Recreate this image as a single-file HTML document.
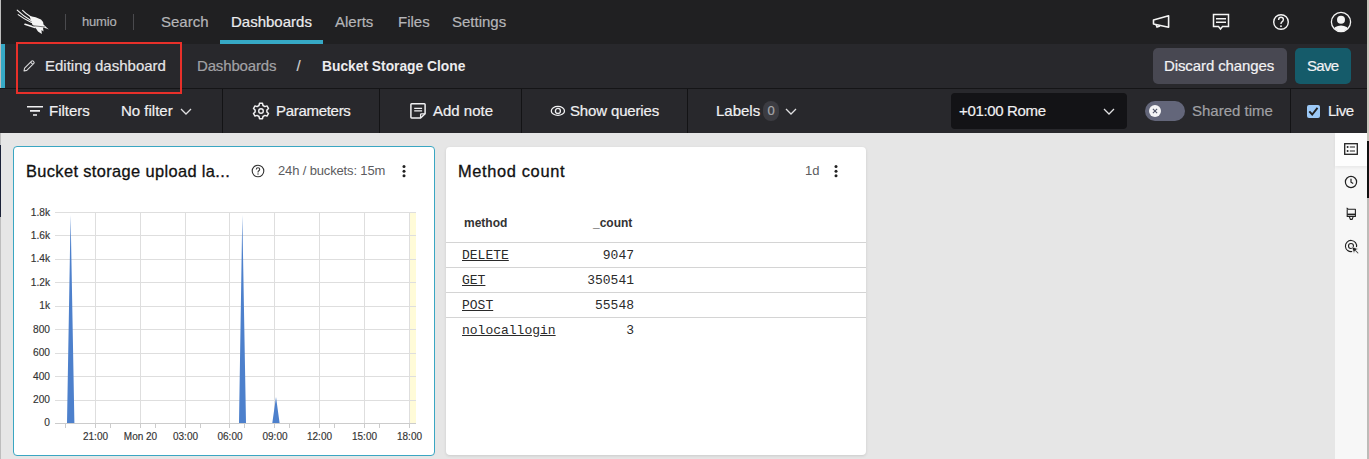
<!DOCTYPE html>
<html><head><meta charset="utf-8">
<style>
*{margin:0;padding:0;box-sizing:border-box}
html,body{width:1369px;height:459px;overflow:hidden;background:#e6e6e6;font-family:"Liberation Sans",sans-serif}
.a{position:absolute;white-space:nowrap;-webkit-text-stroke-width:0.2px}
.ylab,.xlab{-webkit-text-stroke-width:0.15px}
.mono{-webkit-text-stroke-width:0!important}
#top{position:absolute;left:0;top:0;width:1369px;height:44px;background:#202022}
#r2{position:absolute;left:0;top:44px;width:1369px;height:44px;background:#28282c}
#r3{position:absolute;left:0;top:88px;width:1369px;height:45px;background:#28282c;border-top:1px solid #151517}
.nav{font-size:15px;color:#b5b5b8;top:13px}
.sep{position:absolute;width:1px;background:#131315}
.t3{font-size:15px;color:#f0f0f2;top:102px}
.card{position:absolute;background:#fff;border-radius:4px}
.ylab{position:absolute;font-size:10.2px;color:#333;text-align:right;width:30px;left:20px;margin-top:1px}
.xlab{position:absolute;font-size:10px;color:#333;top:431px;width:50px;text-align:center}
.mono{font-family:"Liberation Mono",monospace;font-size:13px;color:#2a2a2a;margin-top:1px}
</style></head><body>
<!-- top nav -->
<div id="top"></div>
<svg class="a" style="left:14px;top:6px" width="40" height="32" viewBox="0 0 40 32">
 <g fill="none" stroke="#f4f4f4" stroke-width="1.1" stroke-linecap="round">
  <path d="M3.2 4.2 Q9 10 17 14.5"/><path d="M8.6 4.4 Q12 8 17 11"/><path d="M4.2 8.6 Q10 13 17.5 16.5"/>
  <path d="M11 18.3 L21 21.5" stroke-width="1.6"/>
 </g>
 <path fill="#f4f4f4" d="M15.5 10 Q22 10.5 27 13.5 Q29.5 15.5 29.5 18.5 L34.8 23.5 L32.5 22.5 L29 21.5 L29.5 25.5 L27.5 24 L27.8 28 L24 25.5 L21 21 L18.5 19 Z"/>
 <path d="M18 19.6 L31 21" stroke="#202022" stroke-width="0.6"/>
</svg>
<div class="sep" style="left:65px;top:14px;height:16px;background:#4a4a4e"></div>
<div class="a" style="left:82px;top:14px;font-size:13px;color:#b0b0b4;letter-spacing:-0.2px">humio</div>
<div class="sep" style="left:133px;top:14px;height:16px;background:#4a4a4e"></div>
<div class="a nav" style="left:161px">Search</div>
<div class="a nav" style="left:231px;color:#ececee">Dashboards</div>
<div class="a" style="left:220px;top:40px;width:103px;height:4px;background:#36a9c6"></div>
<div class="a nav" style="left:335px">Alerts</div>
<div class="a nav" style="left:398px">Files</div>
<div class="a nav" style="left:452px">Settings</div>
<!-- right icons -->
<svg class="a" style="left:1150px;top:12px" width="22" height="20" viewBox="0 0 22 20">
 <path d="M3.5 8 L18.6 3.8 L18.6 15.2 L3.5 12 Z" fill="none" stroke="#f4f4f4" stroke-width="1.6" stroke-linejoin="round"/>
 <path d="M6 12.5 L7 15 L10 14" fill="none" stroke="#f4f4f4" stroke-width="1.5"/>
</svg>
<svg class="a" style="left:1211px;top:12px" width="20" height="20" viewBox="0 0 20 20">
 <path d="M2.5 2.5 H17.5 V14.5 H11.5 L9.5 17 L7.5 14.5 H2.5 Z" fill="none" stroke="#f4f4f4" stroke-width="1.5"/>
 <path d="M5 6.8 H15 M5 10.3 H15" stroke="#f4f4f4" stroke-width="1.4"/>
</svg>
<svg class="a" style="left:1271px;top:12px" width="20" height="20" viewBox="0 0 20 20">
 <circle cx="10" cy="10" r="7.3" fill="none" stroke="#f4f4f4" stroke-width="1.4"/>
 <path d="M7.6 8 Q7.6 5.3 10 5.3 Q12.4 5.3 12.4 7.6 Q12.4 9.2 10.8 10 Q10 10.5 10 12" fill="none" stroke="#f4f4f4" stroke-width="1.4"/>
 <circle cx="10" cy="14.2" r="0.9" fill="#f4f4f4"/>
</svg>
<svg class="a" style="left:1330px;top:11px" width="22" height="22" viewBox="0 0 22 22">
 <defs><clipPath id="uc"><circle cx="11" cy="11" r="9.3"/></clipPath></defs>
 <circle cx="11" cy="11" r="9.6" fill="none" stroke="#f4f4f4" stroke-width="1.3"/>
 <circle cx="11" cy="8.8" r="4" fill="#f4f4f4"/>
 <g clip-path="url(#uc)"><ellipse cx="11" cy="20" rx="8" ry="5.5" fill="#f4f4f4"/></g>
</svg>

<!-- row 2 -->
<div id="r2"></div>
<div class="a" style="left:0;top:0;width:1px;height:88px;background:#bdbdbd"></div>
<div class="a" style="left:1px;top:44px;width:4px;height:44px;background:#36a9c6"></div>
<svg class="a" style="left:22px;top:58.5px" width="14" height="14" viewBox="0 0 14 14">
 <path d="M2 12 L2.6 9.2 L9.6 2.2 Q10.4 1.4 11.2 2.2 L11.8 2.8 Q12.6 3.6 11.8 4.4 L4.8 11.4 Z M8.6 3.2 L10.8 5.4" fill="none" stroke="#d8d8da" stroke-width="1.1" stroke-linejoin="round"/>
</svg>
<div class="a" style="left:45px;top:57px;font-size:15px;color:#e6e6e8">Editing dashboard</div>
<div class="a" style="left:197px;top:57px;font-size:15px;color:#a2a2a6;letter-spacing:-0.15px">Dashboards</div>
<div class="a" style="left:296.5px;top:57px;font-size:15px;color:#d0d0d2">/</div>
<div class="a" style="left:322px;top:59px;font-size:13.8px;font-weight:bold;color:#ececee;-webkit-text-stroke-width:0">Bucket Storage Clone</div>
<div class="a" style="left:1153px;top:48px;width:134px;height:36px;background:#484852;border-radius:5px"></div>
<div class="a" style="left:1164px;top:57px;font-size:15px;color:#f2f2f4;letter-spacing:-0.1px">Discard changes</div>
<div class="a" style="left:1295px;top:48px;width:56px;height:36px;background:#155b6a;border-radius:5px"></div>
<div class="a" style="left:1307px;top:57px;font-size:15px;color:#f2f2f4;letter-spacing:-0.7px">Save</div>

<!-- row 3 -->
<div id="r3"></div>
<div class="sep" style="left:222px;top:89px;height:44px"></div>
<div class="sep" style="left:379px;top:89px;height:44px"></div>
<div class="sep" style="left:521px;top:89px;height:44px"></div>
<div class="sep" style="left:687px;top:89px;height:44px"></div>
<div class="sep" style="left:1290px;top:89px;height:44px"></div>
<svg class="a" style="left:26px;top:104px" width="18" height="14" viewBox="0 0 18 14">
 <path d="M1 2.8 H17 M4 6.9 H14 M7 11 H11" stroke="#f0f0f2" stroke-width="1.6"/>
</svg>
<div class="a t3" style="left:49px">Filters</div>
<div class="a t3" style="left:121px">No filter</div>
<svg class="a" style="left:180px;top:106px" width="12" height="10" viewBox="0 0 12 10"><path d="M1 3 L6 8 L11 3" fill="none" stroke="#e0e0e2" stroke-width="1.3"/></svg>
<svg class="a" style="left:252px;top:102px" width="18" height="18" viewBox="0 0 18 18">
 <path d="M7.5 1.3 H10.5 L11 3.5 L12.9 4.6 L15 3.9 L16.5 6.5 L14.9 8 V10 L16.5 11.5 L15 14.1 L12.9 13.4 L11 14.5 L10.5 16.7 H7.5 L7 14.5 L5.1 13.4 L3 14.1 L1.5 11.5 L3.1 10 V8 L1.5 6.5 L3 3.9 L5.1 4.6 L7 3.5 Z" fill="none" stroke="#f0f0f2" stroke-width="1.5" stroke-linejoin="round"/>
 <circle cx="9" cy="9" r="2.3" fill="none" stroke="#f0f0f2" stroke-width="1.4"/>
</svg>
<div class="a t3" style="left:276px;letter-spacing:-0.3px">Parameters</div>
<svg class="a" style="left:409px;top:102px" width="18" height="18" viewBox="0 0 18 18">
 <path d="M2.6 1.8 H15.3 Q16.1 1.8 16.1 2.6 V11.8 L11.6 16 H2.6 Q1.9 16 1.9 15.3 V2.5 Q1.9 1.8 2.6 1.8 Z" fill="none" stroke="#f0f0f2" stroke-width="1.5" stroke-linejoin="round"/>
 <path d="M16.1 11.8 H12.4 Q11.6 11.8 11.6 12.6 V16" fill="none" stroke="#f0f0f2" stroke-width="1.3"/>
 <path d="M5.2 6.4 H13.1 M5.2 8.8 H13.1" stroke="#f0f0f2" stroke-width="1.3"/>
</svg>
<div class="a t3" style="left:433px">Add note</div>
<svg class="a" style="left:550px;top:104px" width="16" height="14" viewBox="0 0 16 14">
 <ellipse cx="7.9" cy="6.9" rx="6.6" ry="4.5" fill="none" stroke="#f0f0f2" stroke-width="1.3"/>
 <circle cx="7.9" cy="6.9" r="2.5" fill="none" stroke="#f0f0f2" stroke-width="1.3"/>
</svg>
<div class="a t3" style="left:570px;letter-spacing:-0.15px">Show queries</div>
<div class="a t3" style="left:716px">Labels</div>
<div class="a" style="left:763px;top:101px;width:16px;height:20px;background:#3c3c42;border-radius:8px;font-size:13px;color:#a8a8ac;text-align:center;line-height:20px">0</div>
<svg class="a" style="left:785px;top:106px" width="12" height="10" viewBox="0 0 12 10"><path d="M1 3 L6 8 L11 3" fill="none" stroke="#e0e0e2" stroke-width="1.3"/></svg>
<div class="a" style="left:951px;top:93px;width:176px;height:36px;background:#131316;border-radius:4px"></div>
<div class="a t3" style="left:959px;letter-spacing:-0.35px">+01:00 Rome</div>
<svg class="a" style="left:1103px;top:106px" width="12" height="10" viewBox="0 0 12 10"><path d="M1 3 L6 8 L11 3" fill="none" stroke="#e0e0e2" stroke-width="1.3"/></svg>
<div class="a" style="left:1145px;top:101px;width:40px;height:20px;background:#63667a;border-radius:10px"></div>
<svg class="a" style="left:1148px;top:104px" width="14" height="14" viewBox="0 0 14 14">
 <circle cx="7" cy="7" r="6" fill="#f4f4f6"/>
 <path d="M4.9 4.9 L9.1 9.1 M9.1 4.9 L4.9 9.1" stroke="#505468" stroke-width="1.1"/>
</svg>
<div class="a t3" style="left:1192px;color:#a0a0a4">Shared time</div>
<div class="a" style="left:1307px;top:105px;width:13px;height:13px;background:#9cc9f7;border-radius:2px"></div>
<svg class="a" style="left:1307px;top:105px" width="13" height="13" viewBox="0 0 13 13"><path d="M2.3 6.3 L5.2 9.5 L10.5 2.9" fill="none" stroke="#222" stroke-width="1.9"/></svg>
<div class="a t3" style="left:1328px;letter-spacing:-0.5px">Live</div>

<div class="a" style="left:16px;top:42px;width:166px;height:52px;border:2px solid #e8302a"></div>
<!-- content -->
<div class="a" style="left:0;top:133px;width:1px;height:326px;background:#bdbdbd"></div>
<div class="a" style="left:0;top:145px;width:1px;height:72px;background:#1c2238"></div>

<!-- card 1 -->
<div class="card" style="left:13px;top:146px;width:422px;height:310px;border:1px solid #3aa6c2"></div>
<div class="a" style="left:26px;top:162px;font-size:16.4px;color:#111;letter-spacing:0.37px;-webkit-text-stroke:0.3px #111">Bucket storage upload la...</div>
<svg class="a" style="left:251px;top:164px" width="14" height="14" viewBox="0 0 14 14">
 <circle cx="7" cy="7" r="5.8" fill="none" stroke="#333" stroke-width="1.1"/>
 <path d="M5.3 5.6 Q5.3 3.8 7 3.8 Q8.7 3.8 8.7 5.3 Q8.7 6.3 7.6 6.9 Q7 7.3 7 8.4" fill="none" stroke="#333" stroke-width="1.1"/>
 <circle cx="7" cy="10" r="0.7" fill="#333"/>
</svg>
<div class="a" style="left:278px;top:163px;font-size:13px;color:#5c5c60;letter-spacing:-0.15px;-webkit-text-stroke-width:0">24h / buckets: 15m</div>
<svg class="a" style="left:400px;top:164px" width="8" height="14" viewBox="0 0 8 14"><circle cx="4" cy="2.6" r="1.5" fill="#222"/><circle cx="4" cy="7.2" r="1.5" fill="#222"/><circle cx="4" cy="11.8" r="1.5" fill="#222"/></svg>

<svg class="a" style="left:0;top:0" width="440" height="459" viewBox="0 0 440 459">
 <rect x="410" y="212" width="6" height="211" fill="#fffbd8"/>
 <g stroke="#dedede" stroke-width="1">
  <path d="M55 212.5 H416 M55 235.5 H416 M55 259.5 H416 M55 282.5 H416 M55 306.5 H416 M55 329.5 H416 M55 353.5 H416 M55 376.5 H416 M55 400.5 H416"/>
  <path d="M95.5 212 V423 M140.5 212 V423 M185.5 212 V423 M229.5 212 V423 M274.5 212 V423 M319.5 212 V423 M364.5 212 V423 M409.5 212 V423"/>
 </g>
 <path d="M67 423 L70.6 215 L74.4 423 Z M239 423 L242.3 215 L246 423 Z M272.3 423 L276 397 L279.6 423 Z" fill="#4d80cc"/>
 <g stroke="#cccccc" stroke-width="1">
  <path d="M55 423.5 H416"/>
  <path d="M65.5 424 V428 M95.5 424 V428 M110.5 424 V428 M140.5 424 V428 M155.5 424 V428 M185.5 424 V428 M200.5 424 V428 M229.5 424 V428 M244.5 424 V428 M274.5 424 V428 M289.5 424 V428 M319.5 424 V428 M334.5 424 V428 M364.5 424 V428 M379.5 424 V428 M409.5 424 V428"/>
 </g>
</svg>
<div class="ylab" style="top:206px">1.8k</div>
<div class="ylab" style="top:229px">1.6k</div>
<div class="ylab" style="top:252px">1.4k</div>
<div class="ylab" style="top:276px">1.2k</div>
<div class="ylab" style="top:299px">1k</div>
<div class="ylab" style="top:323px">800</div>
<div class="ylab" style="top:346px">600</div>
<div class="ylab" style="top:370px">400</div>
<div class="ylab" style="top:393px">200</div>
<div class="ylab" style="top:416px">0</div>
<div class="xlab" style="left:70.5px">21:00</div>
<div class="xlab" style="left:115.5px">Mon 20</div>
<div class="xlab" style="left:160.5px">03:00</div>
<div class="xlab" style="left:205px">06:00</div>
<div class="xlab" style="left:250px">09:00</div>
<div class="xlab" style="left:294.5px">12:00</div>
<div class="xlab" style="left:339.5px">15:00</div>
<div class="xlab" style="left:384.5px">18:00</div>

<!-- card 2 -->
<div class="card" style="left:446px;top:147px;width:420px;height:308px;box-shadow:0 1px 3px rgba(0,0,0,0.12)"></div>
<div class="a" style="left:458px;top:162px;font-size:16.4px;color:#111;letter-spacing:0.65px;-webkit-text-stroke:0.3px #111">Method count</div>
<div class="a" style="left:805px;top:163px;font-size:13px;color:#5c5c60;-webkit-text-stroke-width:0">1d</div>
<svg class="a" style="left:832px;top:164px" width="8" height="14" viewBox="0 0 8 14"><circle cx="4" cy="2.6" r="1.5" fill="#222"/><circle cx="4" cy="7.2" r="1.5" fill="#222"/><circle cx="4" cy="11.8" r="1.5" fill="#222"/></svg>
<div class="a" style="left:464px;top:216px;font-size:12px;font-weight:bold;color:#333;-webkit-text-stroke-width:0">method</div>
<div class="a" style="left:593px;top:216px;font-size:12px;font-weight:bold;color:#333;-webkit-text-stroke-width:0">_count</div>
<div class="a" style="left:446px;top:242px;width:420px;height:1px;background:#d4d4d4"></div>
<div class="a" style="left:446px;top:267px;width:420px;height:1px;background:#d4d4d4"></div>
<div class="a" style="left:446px;top:292px;width:420px;height:1px;background:#d4d4d4"></div>
<div class="a" style="left:446px;top:317px;width:420px;height:1px;background:#d4d4d4"></div>
<div class="a mono" style="left:462px;top:247px;text-decoration:underline">DELETE</div>
<div class="a mono" style="left:462px;top:272px;text-decoration:underline">GET</div>
<div class="a mono" style="left:462px;top:297px;text-decoration:underline">POST</div>
<div class="a mono" style="left:462px;top:322px;text-decoration:underline">nolocallogin</div>
<div class="a mono" style="left:534px;top:247px;width:100px;text-align:right">9047</div>
<div class="a mono" style="left:534px;top:272px;width:100px;text-align:right">350541</div>
<div class="a mono" style="left:534px;top:297px;width:100px;text-align:right">55548</div>
<div class="a mono" style="left:534px;top:322px;width:100px;text-align:right">3</div>

<!-- right sidebar -->
<div class="a" style="left:1335px;top:133px;width:32px;height:326px;background:#f7f7f7"></div>
<div class="a" style="left:1335px;top:133px;width:32px;height:33px;background:#fdfdfd;box-shadow:0 2px 3px rgba(0,0,0,0.06)"></div>
<svg class="a" style="left:1344px;top:143px" width="14" height="12" viewBox="0 0 14 12">
 <rect x="0.7" y="0.7" width="12.6" height="10.6" fill="none" stroke="#222" stroke-width="1.3"/>
 <circle cx="3.6" cy="4" r="1" fill="#222"/><circle cx="3.6" cy="8" r="1" fill="#222"/>
 <path d="M5.8 4 H11 M5.8 8 H11" stroke="#222" stroke-width="1.2"/>
</svg>
<svg class="a" style="left:1344px;top:175px" width="14" height="14" viewBox="0 0 14 14">
 <circle cx="7" cy="7" r="5.6" fill="none" stroke="#222" stroke-width="1.2"/>
 <path d="M7 3.8 V7.2 L9.2 8.6" fill="none" stroke="#222" stroke-width="1.2"/>
</svg>
<svg class="a" style="left:1346px;top:207px" width="11" height="14" viewBox="0 0 11 14">
 <path d="M0.6 0.8 L2.2 2.2 H9.4 V9.4 H1.2 V2.2" fill="none" stroke="#222" stroke-width="1.1" stroke-linejoin="round"/>
 <rect x="1.2" y="6.6" width="8.2" height="1.5" fill="#222"/>
 <path d="M3.2 9.4 L4.4 12.4 H6.1 L7.3 9.4" fill="none" stroke="#222" stroke-width="1.1"/>
</svg>
<svg class="a" style="left:1344px;top:239px" width="15" height="15" viewBox="0 0 15 15">
 <path d="M12.5 8.2 A5.6 5.6 0 1 0 8.2 12.5" fill="none" stroke="#222" stroke-width="1.1"/>
 <circle cx="7" cy="7" r="2.5" fill="none" stroke="#222" stroke-width="1.1"/>
 <path d="M7.6 7.6 L14.4 10 L11.8 11.1 L14.6 13.9 L13.8 14.7 L11 11.9 L9.9 14.5 Z" fill="#222" stroke="#f7f7f7" stroke-width="0.7"/>
</svg>
<!-- right edge strip -->
<div class="a" style="left:1367px;top:0;width:2px;height:141px;background:#c9c6bc"></div>
<div class="a" style="left:1367px;top:141px;width:2px;height:57px;background:#111"></div>
<div class="a" style="left:1367px;top:198px;width:2px;height:261px;background:#bdbbb8"></div>
</body></html>
